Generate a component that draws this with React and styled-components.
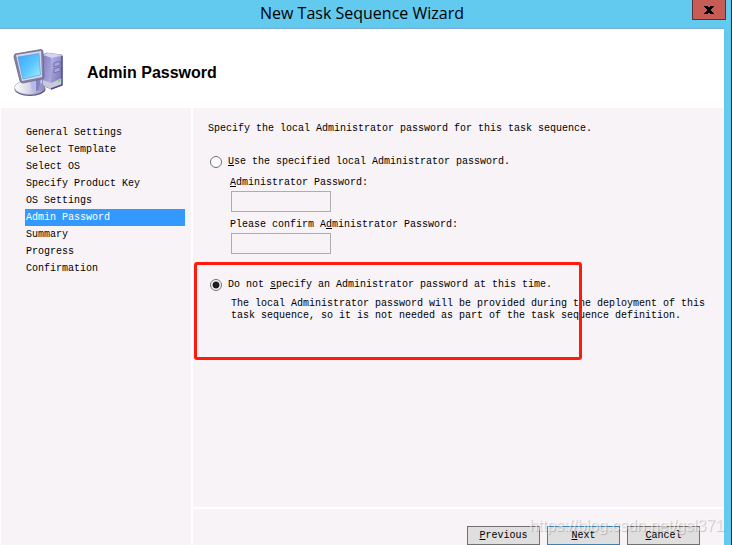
import React, { useState } from 'react';
import styled, { createGlobalStyle } from 'styled-components';

const GlobalStyle = createGlobalStyle`
  * {
    box-sizing: border-box;
  }

  body {
    margin: 0;
    background: #62c9ef;
    color: #000;
    font-family: "Liberation Mono", "Courier New", monospace;
    font-size: 10px;
    line-height: 12px;
  }
`;

const Window = styled.div`
  display: flex;
  flex-direction: column;
  min-height: 100vh;
  background: #62c9ef;
  border-right: 1px solid #14303c;
`;

const TitleBar = styled.header`
  display: flex;
  align-items: flex-start;
  height: 28px;
  padding: 0 5px 0 32px;
`;

const Title = styled.h1`
  flex: 1;
  margin: 0;
  font-family: "Open Sans", "Segoe UI", sans-serif;
  font-size: 16px;
  font-weight: 400;
  line-height: 27px;
  text-align: center;
`;

const CloseButton = styled.button`
  display: flex;
  align-items: center;
  justify-content: center;
  width: 34px;
  height: 20px;
  padding: 0;
  border: 1px solid #5c3038;
  border-top: 0;
  background: #c75b55;
`;

const Client = styled.div`
  flex: 1;
  display: flex;
  flex-direction: column;
  margin-right: 7px;
  border-top: 1px solid #7ba9cf;
  background: #fff;
`;

const Banner = styled.div`
  display: flex;
  align-items: center;
  gap: 21px;
  height: 79px;
  padding: 8px 12px 0;
`;

const PageTitle = styled.h2`
  margin: 0;
  font-family: "Liberation Sans", Arial, sans-serif;
  font-size: 16px;
  font-weight: 700;
  line-height: 20px;
`;

const Body = styled.div`
  flex: 1;
  display: grid;
  grid-template-columns: 190px 1fr;
  gap: 2px;
  padding-left: 1px;
`;

const Sidebar = styled.nav`
  padding: 16px 6px 16px 24px;
  background: #f7f3f7;
`;

const Step = styled.a`
  display: block;
  padding-left: 1px;
  line-height: 17px;
  color: ${({ $active }) => ($active ? '#fff' : '#000')};
  background: ${({ $active }) => ($active ? '#3399ff' : 'transparent')};
  text-decoration: none;
`;

const Main = styled.div`
  display: flex;
  flex-direction: column;
  gap: 2px;
`;

const Content = styled.main`
  flex: 1;
  padding: 15px;
  background: #f7f3f7;
`;

const Intro = styled.p`
  margin: 0 0 21px;
`;

const Option = styled.div`
  position: relative;
`;

const OptionRow = styled.label`
  display: flex;
  align-items: center;
  gap: 6px;
  padding-left: 2px;
`;

const Radio = styled.input`
  appearance: none;
  flex: none;
  width: 12px;
  height: 12px;
  margin: 0;
  border: 1px solid #707070;
  border-radius: 50%;
  background: #fff;

  &:checked {
    background: radial-gradient(circle, #1c1c1c 3px, #fff 4px);
  }
`;

const Fields = styled.div`
  display: flex;
  flex-direction: column;
  align-items: flex-start;
  padding: 7px 0 20px 22px;
`;

const FieldLabel = styled.label`
  line-height: 16px;
`;

const PasswordInput = styled.input`
  width: 100px;
  height: 21px;
  margin: 0 0 5px 1px;
  padding: 0 3px;
  border: 1px solid #abadb3;
  background: transparent;
  font: inherit;
`;

const Description = styled.p`
  margin: 0;
  padding: 7px 0 0 23px;
`;

const Highlight = styled.div`
  position: absolute;
  top: -17px;
  left: -14px;
  width: 388px;
  height: 98px;
  border: 3px solid #ff1a0c;
  border-radius: 3px;
  pointer-events: none;
`;

const Footer = styled.footer`
  position: relative;
  display: flex;
  justify-content: flex-end;
  gap: 7px;
  padding: 17px 24px 0 0;
  background: #f7f3f7;
`;

const Button = styled.button`
  width: 73px;
  height: 19px;
  padding: 0;
  border: 1px solid ${({ $primary }) => ($primary ? '#3c7fb1' : '#707070')};
  background: #dfdfdf;
  color: #000;
  font: inherit;
`;

const Watermark = styled.span`
  position: absolute;
  top: 7px;
  right: 0;
  font-family: "Liberation Sans", Arial, sans-serif;
  font-size: 16px;
  line-height: 20px;
  color: rgba(255, 255, 255, 0.6);
  text-shadow: 1px 1px 1px rgba(0, 0, 0, 0.2);
  pointer-events: none;
`;

const steps = [
  'General Settings',
  'Select Template',
  'Select OS',
  'Specify Product Key',
  'OS Settings',
  'Admin Password',
  'Summary',
  'Progress',
  'Confirmation',
];

function ComputerIcon() {
  return (
    <svg width="54" height="52" viewBox="-1 -2 54 52" aria-hidden="true">
      <defs>
        <linearGradient id="screen" x1="0" y1="0" x2="1" y2="1">
          <stop offset="0" stopColor="#3fa6fb" />
          <stop offset="0.5" stopColor="#58c4ff" />
          <stop offset="1" stopColor="#a4f0ff" />
        </linearGradient>
        <linearGradient id="side" x1="0" y1="0" x2="1" y2="0.4">
          <stop offset="0" stopColor="#7c76c0" />
          <stop offset="1" stopColor="#c9c8ee" />
        </linearGradient>
        <linearGradient id="front" x1="0" y1="0" x2="1" y2="1">
          <stop offset="0" stopColor="#b6b5e4" />
          <stop offset="1" stopColor="#6f6cb0" />
        </linearGradient>
        <linearGradient id="base" x1="0" y1="0" x2="1" y2="0">
          <stop offset="0" stopColor="#ffffff" />
          <stop offset="0.5" stopColor="#d6d5e6" />
          <stop offset="1" stopColor="#8684b8" />
        </linearGradient>
      </defs>
      <path d="M29 6 L34 4 L49 6 L49 36 L38 40 L29 36 Z" fill="url(#side)" stroke="#8b88b8" strokeWidth="0.8" />
      <path d="M38 9 L49 7 L49 36 L38 40 Z" fill="url(#front)" />
      <path d="M30 6 L35 4 L49 6 L39 9 Z" fill="#d4d4f1" />
      <path d="M30 31 L38 34 L49 29 V36 L38 40 L30 36 Z" fill="#c9c8dc" />
      <path d="M41 14 L47 12.5 V16 L41 18 Z M41 20 L47 18 V22 L41 24 Z" fill="#a9aadb" stroke="#5e5ea4" strokeWidth="0.7" />
      <path d="M49 7 V36 L38 40" fill="none" stroke="#4a4794" strokeWidth="1.4" />
      <rect x="45" y="30" width="2" height="3" fill="#58ee59" />
      <ellipse cx="17" cy="40" rx="15.5" ry="7" fill="#5b5887" />
      <ellipse cx="16.5" cy="38.5" rx="15" ry="7" fill="url(#base)" stroke="#aaa8c5" strokeWidth="0.7" />
      <path d="M17 31 L28 29 L26 41 Q22 43 19 41 Z" fill="#b9b8e6" />
      <path d="M23 30 L28 29 L26 41 L23 42 Z" fill="#8482c3" />
      <path d="M2 5 L28 0.5 Q30 0.5 30 3 L31 28 Q31 30 29 30 L10 34 Q8 34 7 32 L1 8 Q1 6 2 5 Z" fill="#83819f" stroke="#6b698c" strokeWidth="0.8" />
      <path d="M3 6 L28 2 L29 28 L9 32 Z" fill="#d6d9f2" />
      <path d="M5 8 L26 4.5 L27.5 26 L10 30 Z" fill="url(#screen)" stroke="#4a96d8" strokeWidth="0.6" />
    </svg>
  );
}

export default function App() {
  const [mode, setMode] = useState('none');

  return (
    <>
      <GlobalStyle />
      <Window>
        <TitleBar>
          <Title>New Task Sequence Wizard</Title>
          <CloseButton type="button" aria-label="Close">
            <svg width="10" height="8" viewBox="0 0 10 8" aria-hidden="true">
              <path d="M0 0H4V1H6V0H10V1H9V2H8V3H7V5H8V6H9V7H10V8H6V7H4V8H0V7H1V6H2V5H3V3H2V2H1V1H0Z" />
            </svg>
          </CloseButton>
        </TitleBar>
        <Client>
          <Banner>
            <ComputerIcon />
            <PageTitle>Admin Password</PageTitle>
          </Banner>
          <Body>
            <Sidebar>
              {steps.map((step) => (
                <Step key={step} href="#" $active={step === 'Admin Password'}>
                  {step}
                </Step>
              ))}
            </Sidebar>
            <Main>
              <Content>
                <Intro>Specify the local Administrator password for this task sequence.</Intro>
                <Option>
                  <OptionRow>
                    <Radio
                      type="radio"
                      name="mode"
                      checked={mode === 'specified'}
                      onChange={() => setMode('specified')}
                    />
                    <span><u>U</u>se the specified local Administrator password.</span>
                  </OptionRow>
                  <Fields>
                    <FieldLabel htmlFor="password"><u>A</u>dministrator Password:</FieldLabel>
                    <PasswordInput id="password" type="password" disabled={mode === 'none'} />
                    <FieldLabel htmlFor="confirm">Please confirm A<u>d</u>ministrator Password:</FieldLabel>
                    <PasswordInput id="confirm" type="password" disabled={mode === 'none'} />
                  </Fields>
                </Option>
                <Option>
                  <OptionRow>
                    <Radio
                      type="radio"
                      name="mode"
                      checked={mode === 'none'}
                      onChange={() => setMode('none')}
                    />
                    <span>Do not <u>s</u>pecify an Administrator password at this time.</span>
                  </OptionRow>
                  <Description>
                    The local Administrator password will be provided during the deployment of this
                    task sequence, so it is not needed as part of the task sequence definition.
                  </Description>
                  <Highlight />
                </Option>
              </Content>
              <Footer>
                <Button type="button"><u>P</u>revious</Button>
                <Button type="button" $primary><u>N</u>ext</Button>
                <Button type="button"><u>C</u>ancel</Button>
                <Watermark>https://blog.csdn.net/gsl371</Watermark>
              </Footer>
            </Main>
          </Body>
        </Client>
      </Window>
    </>
  );
}
